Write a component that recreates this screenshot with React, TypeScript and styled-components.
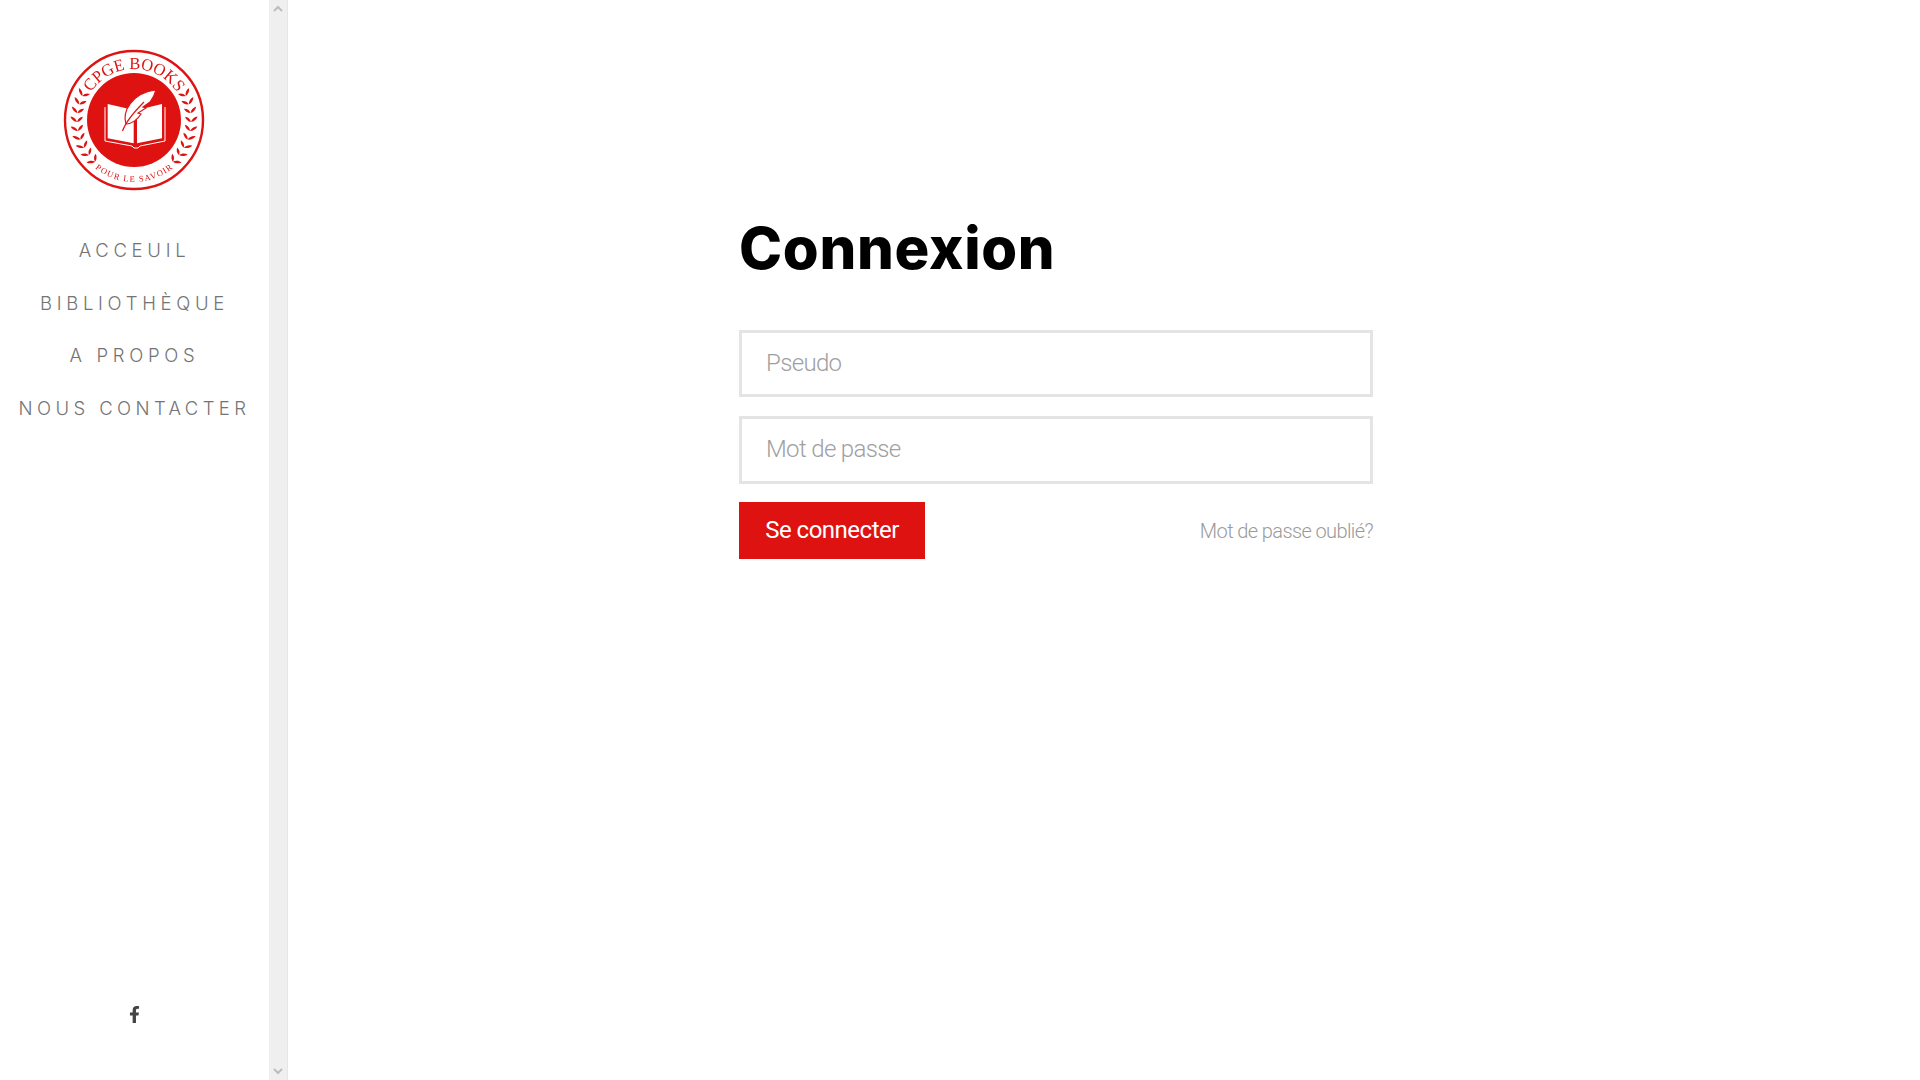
import styled, { createGlobalStyle } from "styled-components";
import { FaFacebookF } from "react-icons/fa";

const RED = "#df1212";

const GlobalStyle = createGlobalStyle`
  html, body {
    margin: 0;
    height: 100%;
    background: #fff;
    overflow: hidden;
  }
`;

const Page = styled.div`
  display: flex;
  height: 1080px;
`;

const Sidebar = styled.aside`
  width: 269px;
  display: flex;
  flex-direction: column;
  align-items: center;
  padding-top: 48px;
  box-sizing: border-box;
`;

const Logo = styled.svg`
  width: 144px;
  height: 144px;
  display: block;
  flex: none;
  margin-right: 2px;
  filter: blur(0.3px);
`;

const Nav = styled.nav`
  margin-top: 32px;
  display: flex;
  flex-direction: column;
  align-items: center;
`;

const NavLink = styled.a`
  height: 52.5px;
  line-height: 52.5px;
  font-family: Inter, "Liberation Sans", sans-serif;
  font-weight: 300;
  font-size: 18.5px;
  letter-spacing: 4.7px;
  color: #747474;
  white-space: nowrap;
`;

const NarrowLink = styled(NavLink)`
  letter-spacing: 4.4px;
`;

const Social = styled.a`
  margin-top: auto;
  margin-bottom: 57px;
  display: flex;
  color: #444;
  font-size: 17px;
`;

const Track = styled.div`
  width: 18px;
  flex: none;
  background: #efefef;
  border-right: 1px solid #e6e6e6;
  display: flex;
  flex-direction: column;
  justify-content: space-between;
  align-items: center;
  padding: 5px 0;
  box-sizing: content-box;
  height: 1070px;
`;

const Arrow = styled.svg`
  width: 10px;
  height: 7px;
  fill: none;
  stroke: #bdbdbd;
  stroke-width: 2;
`;

const Main = styled.main`
  flex: 1;
  padding: 213px 0 0 451px;
`;

const Title = styled.h1`
  margin: 0 0 46.9px;
  height: 70px;
  line-height: 70px;
  font-family: Inter, "Liberation Sans", sans-serif;
  font-weight: 800;
  font-size: 58px;
  letter-spacing: 0.7px;
  color: #000;
`;

const Form = styled.form`
  width: 634px;
  display: flex;
  flex-direction: column;
  gap: 18.65px;
`;

const Field = styled.input`
  width: 100%;
  height: 67.55px;
  box-sizing: border-box;
  border: 3px solid #e4e4e4;
  border-radius: 0;
  outline: none;
  padding: 0 24px 2px;
  background: #fff;
  font-family: Roboto, "Liberation Sans", sans-serif;
  font-weight: 300;
  font-size: 24px;
  letter-spacing: -0.65px;
  color: #333;

  &::placeholder {
    color: #a0a0a0;
    opacity: 1;
  }
`;

const Actions = styled.div`
  display: flex;
  justify-content: space-between;
  align-items: center;
`;

const Submit = styled.button`
  width: 186px;
  height: 57px;
  border: 0;
  padding: 0 0 2px;
  background: ${RED};
  color: #fff;
  font-family: Roboto, "Liberation Sans", sans-serif;
  font-weight: 400;
  font-size: 24px;
  letter-spacing: -0.5px;
`;

const Forgot = styled.a`
  padding-top: 1px;
  font-family: Roboto, "Liberation Sans", sans-serif;
  font-weight: 300;
  font-size: 20px;
  letter-spacing: -0.6px;
  color: #9a9a9a;
`;

// laurel leaves, angle in degrees from the horizontal (down is positive)
const leafAngles = [-27, -18, -9, 0, 9, 18, 27, 36, 45];

function Branch({ flip }: { flip?: boolean }) {
  return (
    <g transform={flip ? "translate(144 0) scale(-1 1)" : undefined} fill={RED}>
      {leafAngles.map((a) => {
        const rad = (a * Math.PI) / 180;
        const x = 72 - 57 * Math.cos(rad);
        const y = 72 + 57 * Math.sin(rad);
        return (
          <g key={a} transform={`translate(${x} ${y}) rotate(${-a})`}>
            <path d="M0 2C-3 1.6 -5.5 -.4 -6.6 -3.6C-3.4 -3.2 -.8 -1 0 2Z" />
            <path d="M0 2C2.8 1.6 5 -.2 6 -3.2C3 -3 .6 -1 0 2Z" />
          </g>
        );
      })}
    </g>
  );
}

function BrandLogo() {
  return (
    <Logo viewBox="0 0 144 144">
      <defs>
        <path id="arc-top" d="M72 72m-51 0a51 51 0 0 1 102 0" />
        <path id="arc-bottom" d="M72 72m-62 0a62 62 0 0 0 124 0" />
      </defs>
      <circle cx="72" cy="72" r="69" fill="none" stroke={RED} strokeWidth="2.4" />
      <circle cx="72" cy="72" r="47" fill={RED} />
      <text fill={RED} fontFamily="Liberation Serif, serif" fontSize="17">
        <textPath
          href="#arc-top"
          startOffset="50%"
          textAnchor="middle"
          textLength="102"
          lengthAdjust="spacingAndGlyphs"
        >
          CPGE BOOKS
        </textPath>
      </text>
      <text fill={RED} fontFamily="Liberation Serif, serif" fontSize="8.5">
        <textPath href="#arc-bottom" startOffset="50%" textAnchor="middle" textLength="84">
          POUR LE SAVOIR
        </textPath>
      </text>
      <Branch />
      <Branch flip />
      <path d="M43 59V93L70 98L72 100H76L78 98L103 93V59" fill="none" stroke="#fff" strokeWidth="1" />
      <path d="M45.7 56L71.7 62V95.3L45.7 90.3Z" fill="#fff" />
      <path d="M75 62L100 56V90.3L75 95.3Z" fill="#fff" />
      <path
        d="M94 42C84 43 74 48 68 56C63 62 62 70 64 76C70 76 76 71 79 66L76 65L84 60L81 59L88 54C91 50 93 46 94 42Z"
        fill="#fff"
        stroke={RED}
        strokeWidth="1.2"
      />
      <path d="M60.5 83C63 76 70 66 82 54" fill="none" stroke={RED} strokeWidth="1.2" />
    </Logo>
  );
}

export default function App() {
  return (
    <>
      <GlobalStyle />
      <Page>
        <Sidebar>
          <BrandLogo />
          <Nav>
            <NavLink>ACCEUIL</NavLink>
            <NavLink>BIBLIOTHÈQUE</NavLink>
            <NavLink>A PROPOS</NavLink>
            <NarrowLink>NOUS CONTACTER</NarrowLink>
          </Nav>
          <Social>
            <FaFacebookF />
          </Social>
        </Sidebar>
        <Track>
          <Arrow viewBox="0 0 10 7">
            <path d="M1 6L5 2L9 6" />
          </Arrow>
          <Arrow viewBox="0 0 10 7">
            <path d="M1 1L5 5L9 1" />
          </Arrow>
        </Track>
        <Main>
          <Title>Connexion</Title>
          <Form>
            <Field placeholder="Pseudo" />
            <Field placeholder="Mot de passe" />
            <Actions>
              <Submit type="button">Se connecter</Submit>
              <Forgot>Mot de passe oublié?</Forgot>
            </Actions>
          </Form>
        </Main>
      </Page>
    </>
  );
}
